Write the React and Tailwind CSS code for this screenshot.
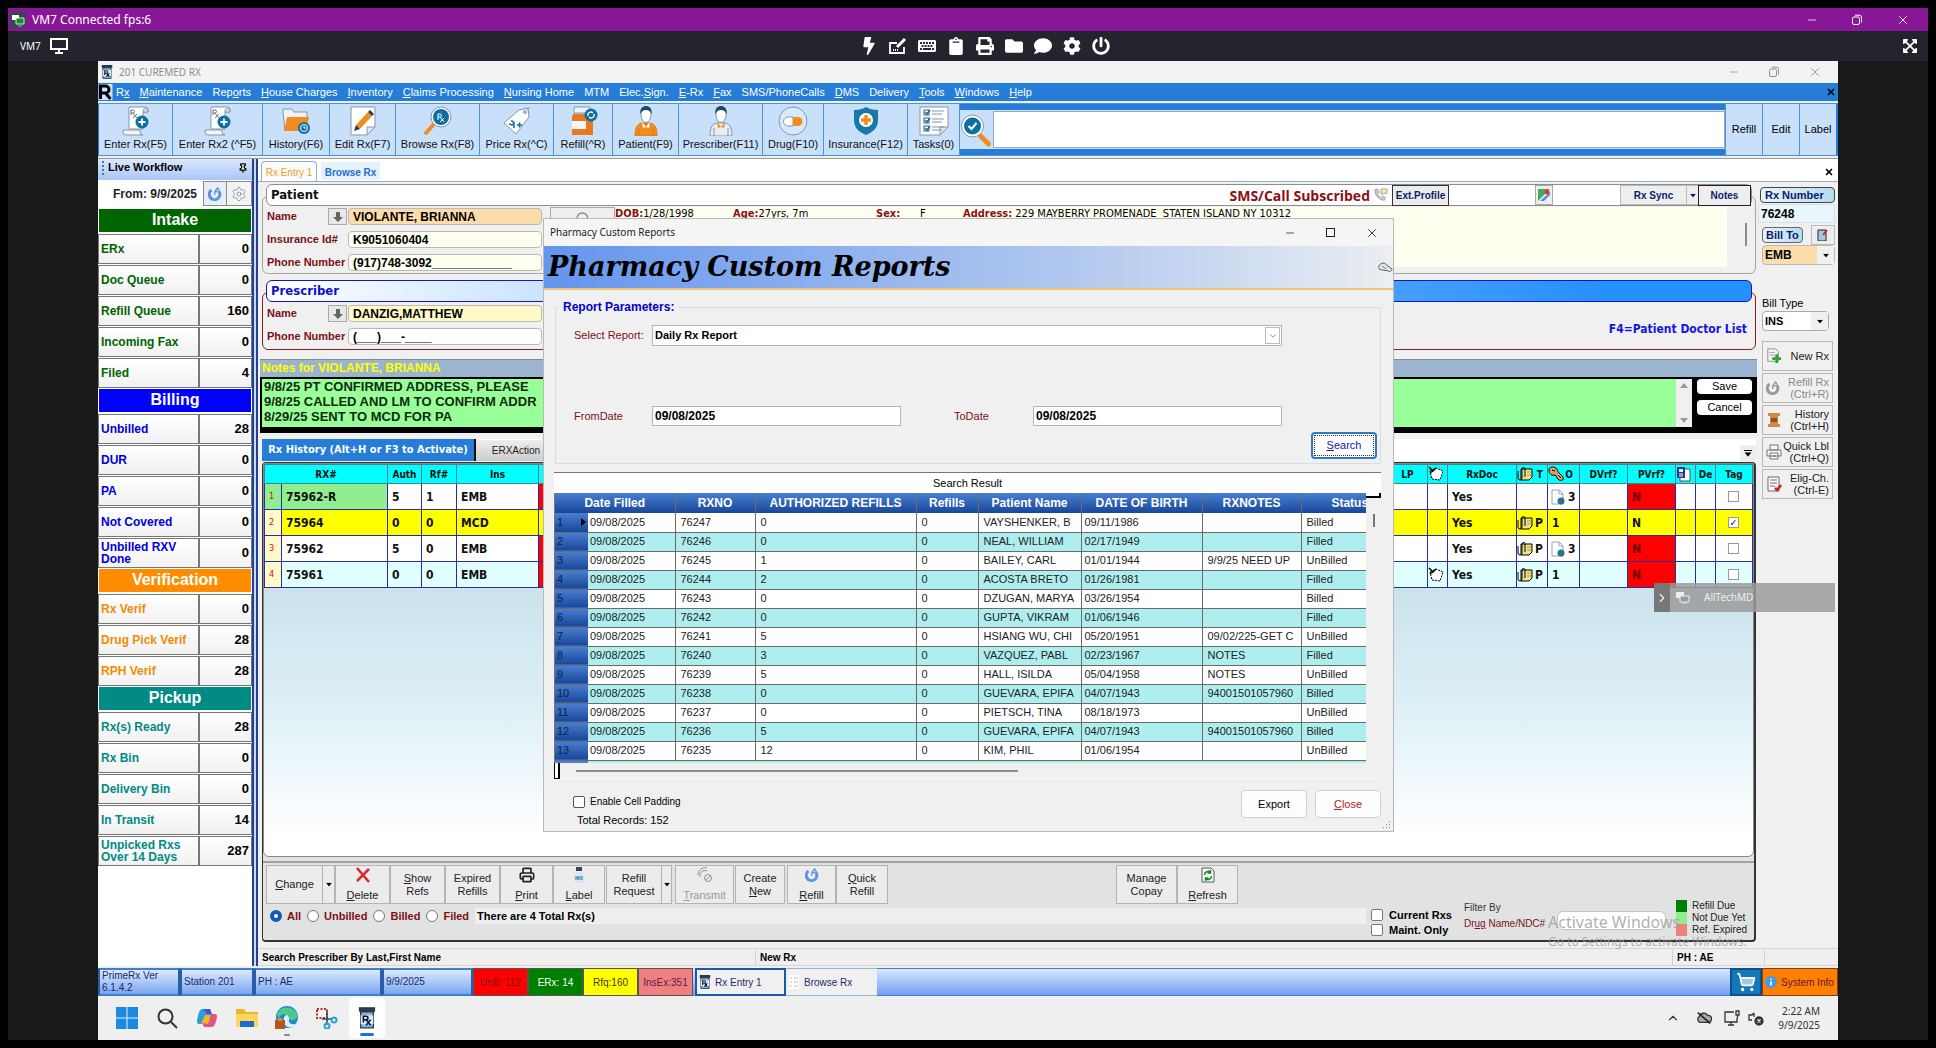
import { Minus, X, ChevronUp, ChevronRight, ChevronDown, Pin, Settings, ShoppingCart, Search, Printer } from 'lucide-react';
import { FaBolt, FaKeyboard, FaClipboard, FaPrint, FaFolder, FaComment, FaCog, FaPowerOff, FaExpandArrowsAlt } from 'react-icons/fa';

const sections = [
	{
		title: 'Intake',
		head: 'bg-[#006400]',
		text: 'text-[#006400]',
		rows: [['ERx', 0], ['Doc Queue', 0], ['Refill Queue', 160], ['Incoming Fax', 0], ['Filed', 4]],
	},
	{
		title: 'Billing',
		head: 'bg-[#0000ff]',
		text: 'text-[#0000e0]',
		rows: [['Unbilled', 28], ['DUR', 0], ['PA', 0], ['Not Covered', 0], ['Unbilled RXV Done', 0]],
	},
	{
		title: 'Verification',
		head: 'bg-[#ff8c00]',
		text: 'text-[#f08c00]',
		rows: [['Rx Verif', 0], ['Drug Pick Verif', 28], ['RPH Verif', 28]],
	},
	{
		title: 'Pickup',
		head: 'bg-[#008b85]',
		text: 'text-[#008b85]',
		rows: [['Rx(s) Ready', 28], ['Rx Bin', 0], ['Delivery Bin', 0], ['In Transit', 14], ['Unpicked Rxs Over 14 Days', 287]],
	},
];

const menus = ['R&x', '&Maintenance', 'Rep&orts', '&House Charges', '&Inventory', '&Claims Processing', '&Nursing Home', 'MTM', 'Elec.&Sign.', '&E-Rx', '&Fax', 'SMS/PhoneCalls', '&DMS', 'Delivery', '&Tools', '&Windows', '&Help'];

const reportRows = [
	['76247', '0', 'VAYSHENKER, B', '09/11/1986', '', 'Billed'],
	['76246', '0', 'NEAL, WILLIAM', '02/17/1949', '', 'Filled'],
	['76245', '1', 'BAILEY, CARL', '01/01/1944', '9/9/25 NEED UP', 'UnBilled'],
	['76244', '2', 'ACOSTA BRETO', '01/26/1981', '', 'Filled'],
	['76243', '0', 'DZUGAN, MARYA', '03/26/1954', '', 'Billed'],
	['76242', '0', 'GUPTA, VIKRAM', '01/06/1946', '', 'Filled'],
	['76241', '5', 'HSIANG WU, CHI', '05/20/1951', '09/02/225-GET C', 'UnBilled'],
	['76240', '3', 'VAZQUEZ, PABL', '02/23/1967', 'NOTES', 'Filled'],
	['76239', '5', 'HALL, ISILDA', '05/04/1958', 'NOTES', 'UnBilled'],
	['76238', '0', 'GUEVARA, EPIFA', '04/07/1943', '94001501057960', 'Billed'],
	['76237', '0', 'PIETSCH, TINA', '08/18/1973', '', 'UnBilled'],
	['76236', '5', 'GUEVARA, EPIFA', '04/07/1943', '94001501057960', 'Billed'],
	['76235', '12', 'KIM, PHIL', '01/06/1954', '', 'UnBilled'],
];

const history = [
	{ rx: '75962-R', auth: 5, rf: 1, ins: 'EMB', t: '', o: '3', doc: true },
	{ rx: '75964', auth: 0, rf: 0, ins: 'MCD', t: 'P', o: '1', tag: true },
	{ rx: '75962', auth: 5, rf: 0, ins: 'EMB', t: 'P', o: '3', doc: true },
	{ rx: '75961', auth: 0, rf: 0, ins: 'EMB', t: 'P', o: '1', note: true },
];

// "&" marks the letter that gets the accelerator underline
function Hot({ t }) {
	const i = t.indexOf('&');
	if (i < 0) return <span>{t}</span>;
	return (
		<span>
			{t.slice(0, i)}
			<span className="underline">{t[i + 1]}</span>
			{t.slice(i + 2)}
		</span>
	);
}

function Restore({ className }) {
	return (
		<svg viewBox="0 0 12 12" className={className} fill="none" stroke="currentColor">
			<rect x="1.5" y="3" width="7" height="7.5" rx="1.5" />
			<path d="M4 1.2h4.5a2 2 0 0 1 2 2V8.500" />
		</svg>
	);
}

function RxJar({ className }) {
	return (
		<svg viewBox="0 0 20 24" className={className}>
			<rect x="1" y="0" width="18" height="5" fill="#27384f" />
			<path d="M3 5h14v18H3z" fill="#8fb4dc" stroke="#27384f" strokeWidth="1.5" />
			<path d="M3 9h14v10H3z" fill="#dfe9f5" />
			<path d="M6 17V10h3a2 2 0 0 1 0 4H6m3 0 5 6m0-6-5 6" fill="none" stroke="#0b1a33" strokeWidth="1.800" />
		</svg>
	);
}

function Scroll() {
	return (
		<svg viewBox="0 0 30 30" className="h-[30px] w-[30px]">
			<path d="M8 1h16a3 3 0 0 1 3 3v2h-5v17H8z" fill="#fff" stroke="#8795a5" />
			<path d="M22 6V4a3 3 0 0 1 5 0v2z" fill="#dfe7ef" stroke="#8795a5" />
			<path d="M2 24h17v2a3 3 0 0 0 3 3H5a3 3 0 0 1-3-3z" fill="#f3f6f9" stroke="#8795a5" />
			<path d="M10 9V4h2a1.500 1.500 0 0 1 0 3h-2m2 0 4 5m0-4-4 4" fill="none" stroke="#46586c" strokeWidth=".8" />
			<circle cx="21" cy="16" r="6.500" fill="#0b6fa4" />
			<path d="M21 12.500v7M17.500 16h7" stroke="#fff" strokeWidth="1.800" />
		</svg>
	);
}

function FolderIcon() {
	return (
		<svg viewBox="0 0 30 30" className="h-[30px] w-[30px]">
			<path d="M2 6V3h9l2 3h13v18H4z" fill="#eef3f8" stroke="#8795a5" />
			<path d="M6 11h22l-3 14H3z" fill="#f28c1e" />
			<circle cx="23" cy="22" r="6" fill="#0b6fa4" />
			<circle cx="23" cy="22" r="3.500" fill="none" stroke="#fff" />
			<path d="M23 20v2h2" stroke="#fff" fill="none" />
		</svg>
	);
}

function EditIcon() {
	return (
		<svg viewBox="0 0 30 30" className="h-[30px] w-[30px]">
			<path d="M3 1h24v20l-8 8H3z" fill="#fff" stroke="#8795a5" />
			<path d="M27 21h-8v8z" fill="#dfe7ef" stroke="#8795a5" />
			<path d="m8 19 12-13 4 4-12 13z" fill="#f28c1e" />
			<path d="m20 6 2-2 4 4-2 2z" fill="#1d3f5e" />
			<path d="m8 19 4 4-6 2z" fill="#1d3f5e" />
		</svg>
	);
}

function LensRx() {
	return (
		<svg viewBox="0 0 30 30" className="h-[30px] w-[30px]">
			<path d="m10 19-7 8" stroke="#f28c1e" strokeWidth="4" strokeLinecap="round" />
			<circle cx="18" cy="11" r="10" fill="#fff" stroke="#8795a5" />
			<circle cx="18" cy="11" r="8" fill="#0b6fa4" />
			<path d="M15 14V8h2a1.500 1.500 0 0 1 0 3h-2m2 0 4 5m0-4-4 4" fill="none" stroke="#fff" />
		</svg>
	);
}

function TagIcon() {
	return (
		<svg viewBox="0 0 30 30" className="h-[30px] w-[30px]">
			<path d="M2 17 17 4l9-2 1 9-13 17z" fill="#fff" stroke="#8795a5" />
			<circle cx="23" cy="6" r="1.500" fill="#c9e0fa" stroke="#8795a5" />
			<path d="M25 4l3-3" stroke="#8795a5" />
			<path d="M9 15a2 2 0 1 1 1 4l-3-1m5 4v-6m3 3h5m-2.500-2.500v5" fill="none" stroke="#0b6fa4" strokeWidth="1.500" />
		</svg>
	);
}

function Bottle() {
	return (
		<svg viewBox="0 0 30 30" className="h-[30px] w-[30px]">
			<path d="M6 1h16v6H6z" fill="#eef3f8" stroke="#8795a5" />
			<path d="M5 8h18l2 3v18H4V11z" fill="#e8791e" />
			<path d="M4 15h14v8H4z" fill="#f4f6f8" />
			<circle cx="23" cy="9" r="6.500" fill="#0b6fa4" />
			<path d="M20 10a3 3 0 0 1 5-3m1 1a3 3 0 0 1-5 3" fill="none" stroke="#fff" strokeWidth="1.300" />
		</svg>
	);
}

function Person({ coat }) {
	return (
		<svg viewBox="0 0 30 30" className="h-[30px] w-[30px]">
			<path d="M4 30c0-8 2-12 7-13h8c5 1 7 5 7 13z" fill={coat ? '#e6edf4' : '#f28c1e'} stroke={coat ? '#8795a5' : '#d87a18'} />
			<ellipse cx="15" cy="9" rx="5" ry="7.500" fill="#fff" stroke="#8795a5" />
			<path d="M9 8c0-6 3-8 6-8s6 2 6 8c-2-3-3-4-6-4s-4 1-6 4z" fill="#1d4a66" />
			<path d="m11 16 4 5 4-5-1 6-3-1-3 1z" fill={coat ? '#f28c1e' : '#fff'} />
			<path d="M8 22v8M22 22v8" stroke={coat ? '#8795a5' : '#d87a18'} />
		</svg>
	);
}

function Pill() {
	return (
		<svg viewBox="0 0 30 30" className="h-[30px] w-[30px]">
			<circle cx="15" cy="15" r="14" fill="#d7e9fc" stroke="#8795a5" />
			<path d="M15 11H10a4 4 0 0 0 0 9h5z" fill="#fff" stroke="#8795a5" />
			<path d="M15 11h5a4 4 0 0 1 0 9h-5z" fill="#f28c1e" />
		</svg>
	);
}

function Shield() {
	return (
		<svg viewBox="0 0 30 30" className="h-[30px] w-[30px]">
			<path d="M3 4c5 0 9-1 12-3 3 2 7 3 12 3v10c0 8-5 12-12 15C8 26 3 22 3 14z" fill="#1878a8" />
			<circle cx="15" cy="14" r="7" fill="#fff" />
			<path d="M15 9v10M10 14h10" stroke="#f28c1e" strokeWidth="3.500" />
		</svg>
	);
}

function Tasks() {
	return (
		<svg viewBox="0 0 30 30" className="h-[30px] w-[30px]">
			<path d="M1 1h28v20l-8 8H1z" fill="#fff" stroke="#8795a5" />
			<path d="M29 21h-8v8z" fill="#dfe7ef" stroke="#8795a5" />
			{[4, 12, 20].map((y) => (
				<g key={y} fill="none">
					<rect x="5" y={y} width="5" height="5" stroke="#46586c" />
					<path d={`m6 ${y + 2} 2 2 3-4`} stroke="#0b6fa4" strokeWidth="1.500" />
					<path d={`M13 ${y + 1}h12M13 ${y + 4}h10`} stroke="#8795a5" />
				</g>
			))}
		</svg>
	);
}

const tools = [
	['Enter Rx(F5)', 'w-[74px]', <Scroll />],
	['Enter Rx2 (^F5)', 'w-[90px]', <Scroll />],
	['History(F6)', 'w-[67px]', <FolderIcon />],
	['Edit Rx(F7)', 'w-[66px]', <EditIcon />],
	['Browse Rx(F8)', 'w-[84px]', <LensRx />],
	['Price Rx(^C)', 'w-[74px]', <TagIcon />],
	['Refill(^R)', 'w-[59px]', <Bottle />],
	['Patient(F9)', 'w-[66px]', <Person />],
	['Prescriber(F11)', 'w-[84px]', <Person coat />],
	['Drug(F10)', 'w-[61px]', <Pill />],
	['Insurance(F12)', 'w-[84px]', <Shield />],
	['Tasks(0)', 'w-[52px]', <Tasks />],
];

function NoteTag() {
	return (
		<svg viewBox="0 0 16 16" className="h-4 w-4">
			<path d="m2 5 6-3 7 3-3 9-8-1z" fill="#fff" stroke="#000" strokeDasharray="2 1" />
			<path d="M1 1l4 4-3 2m3-2 3-3" fill="none" stroke="#000" strokeWidth="1.500" />
		</svg>
	);
}

function Clip() {
	return (
		<svg viewBox="0 0 16 16" className="h-4 w-4 shrink-0">
			<path d="M4 3h11v8l-3 3H4z" fill="#efe28a" stroke="#000" />
			<path d="M1 5v7a2 2 0 0 0 4 0V3a1.500 1.500 0 0 1 3 0v8" fill="none" stroke="#000" />
			<path d="M10 6h4M10 9h4" stroke="#a89a40" />
		</svg>
	);
}

function Doc() {
	return (
		<svg viewBox="0 0 16 16" className="h-4 w-4 shrink-0">
			<path d="M2 1h7l4 4v10H2z" fill="#fff" stroke="#9aa4ad" />
			<path d="M9 1v4h4" fill="none" stroke="#9aa4ad" />
			<circle cx="11" cy="12" r="3.500" fill="#2f6f96" />
		</svg>
	);
}

function Key() {
	return (
		<svg viewBox="0 0 16 16" className="h-4 w-4 shrink-0">
			<path d="M1 4c0-3 4-4 7-2 2 2 1 3 3 5l4 4c1 3-1 4-4 3-2-1-2-4-4-5-3 1-6-1-6-5z" fill="#d9a066" stroke="#000" />
			<path d="M4 4l3 1m3 4 3 3" stroke="#000" />
		</svg>
	);
}

function Swirl({ className }) {
	return (
		<svg viewBox="0 0 16 16" className={className} fill="none" stroke="currentColor">
			<path d="M4 3.500a6 6 0 1 0 9 2.500" strokeWidth="3.500" />
			<path d="M8 9c-1-3 0-5 3-7M11 1l3 5-6-1z" strokeWidth="1.500" />
		</svg>
	);
}

function Down({ className = '' }) {
	return (
		<svg viewBox="0 0 8 5" className={`h-[5px] w-2 ${className}`}>
			<path d="M0 0h8L4 5z" fill="currentColor" />
		</svg>
	);
}

function Workflow() {
	return (
		<aside className="w-[154px] shrink-0 bg-white">
			<div className="flex h-[21px] items-center justify-between bg-linear-to-b from-[#dbe8fc] to-[#a9c6f5] pr-1 pb-1 pl-1">
				<span className="flex items-center gap-1 text-[11px] font-bold">
					<span className="h-3.5 border-l-2 border-dotted border-[#5470a8]" />
					Live Workflow
				</span>
				<Pin className="size-[10px] fill-white stroke-[3]" />
			</div>
			<div className="flex h-[29px] items-center justify-end gap-0 pb-0.5">
				<span className="pr-1.5 text-[12px] font-bold text-[#222]">From: 9/9/2025</span>
				<button className="flex h-[25px] w-6 items-center justify-center border border-[#8a8a8a] bg-[#e6eefa]" aria-label="Reload">
					<Swirl className="h-3.5 w-3.5 text-[#5d93e0]" />
				</button>
				<button className="flex h-[25px] w-[25px] items-center justify-center border border-l-0 border-[#8a8a8a] bg-[#f4f4f4]" aria-label="Options">
					<Settings className="size-4 stroke-1 text-[#6f7780]" />
				</button>
			</div>
			{sections.map((s) => (
				<section key={s.title}>
					<h2 className={`mx-px mb-0.5 h-[23px] text-center text-[16px] leading-[22px] font-bold text-white ${s.head}`}>{s.title}</h2>
					{s.rows.map(([label, n]) => (
						<div key={label} className="mb-px flex h-[30px] border border-[#777] bg-linear-to-b from-white to-[#f1f1f1]">
							<div className={`flex w-[101px] items-center border-r-2 border-[#777] pb-px pl-0.5 text-[12px] leading-[12px] font-bold ${s.text}`}>
								<span className="max-w-[88px]">{label}</span>
							</div>
							<div className="flex flex-1 items-center justify-end pr-0.5 pb-px text-[13px] font-bold">{n}</div>
						</div>
					))}
				</section>
			))}
		</aside>
	);
}

function Field({ id, label, value, tone, arrow }) {
	return (
		<div className="flex h-[17px] items-center">
			<label htmlFor={id} className={`${arrow ? 'w-[61px]' : 'w-[81px]'} shrink-0 text-[11px] font-bold whitespace-nowrap text-[#7b1113]`}>{label}</label>
			{arrow && (
				<button className="mr-px flex h-[17px] w-[19px] items-center justify-center border border-[#aaa] bg-[#e8e8e8] text-[#666]" aria-label={`Find ${label}`}>
					<svg viewBox="0 0 10 10" className="h-2.5 w-2.5"><path d="M3 0h4v5h3l-5 5-5-5h3z" fill="currentColor" /></svg>
				</button>
			)}
			<input id={id} defaultValue={value} className={`h-[17px] w-[194px] rounded-sm border border-[#b9b9b9] px-1 text-[12px] font-bold ${tone}`} />
		</div>
	);
}

function PatientPanel() {
	return (
		<section className="mt-0.5">
			<div className="relative z-10 mx-1 flex h-[22px] items-center rounded-md border border-[#8e8e8e] bg-white pl-1">
				<h3 className="font-['DejaVu_Sans_Condensed','DejaVu_Sans',sans-serif] text-[13px] font-bold text-[#111]">Patient</h3>
				<div className="flex-1" />
				<span className="font-['Open_Sans',sans-serif] text-[14px] font-bold text-[#8b0f14]">SMS/Call Subscribed</span>
				<svg viewBox="0 0 16 16" className="mx-1 h-3.5 w-3.5">
					<path d="M1 2l3-1 2 4-2 1c1 3 2 4 4 5l2-2 3 2-1 3C6 14 1 9 1 2z" fill="#c6ccd2" stroke="#97a1ab" />
					<path d="M8 1h7v5h-4l-2 2V6H8z" fill="#f5e6b8" stroke="#a8a08a" />
				</svg>
				<button className="h-[21px] w-[57px] border border-[#333] bg-[#ececec] text-[10px] font-bold text-[#0a1b6e]">Ext.Profile</button>
				<button className="mr-[67px] ml-[86px] flex h-5 w-[18px] items-center justify-center border border-[#aaa] bg-[#eee]" aria-label="Map">
					<svg viewBox="0 0 12 12" className="h-3 w-3"><path d="M0 0h12v12H0z" fill="#3fae5a" /><path d="M0 12 12 0v12z" fill="#f2f2f2" /><path d="M2 12 12 3v3l-6 6z" fill="#4c8df5" /><circle cx="9" cy="3" r="2.500" fill="#e33b2e" /></svg>
				</button>
				<button className="h-5 w-[67px] border border-[#bbb] bg-[#eee] text-[10px] font-bold text-[#0a1b6e]">Rx Sync</button>
				<button className="flex h-5 w-[11px] items-center justify-center border-y border-[#bbb] bg-[#eee] text-[#0a1b6e]" aria-label="Rx Sync options"><Down className="scale-75" /></button>
				<button className="h-[21px] w-[53px] border border-[#222] bg-[#eee] text-[10px] font-bold text-[#0a1b6e]">Notes</button>
			</div>
			<div className="-mt-2.5 flex h-[78px] rounded-md border border-[#a5a5a5] pt-[10px] pl-1">
				<div className="flex flex-col gap-[6px] pt-px">
					<Field id="pname" label="Name" value="VIOLANTE, BRIANNA" tone="bg-[#fcdcab]" arrow />
					<Field id="pins" label="Insurance Id#" value="K9051060404" tone="bg-[#fffff0]" />
					<Field id="pphone" label="Phone Number" value="(917)748-3092____________" tone="bg-[#fffff0]" />
				</div>
				<button className="ml-2 flex h-5 w-[65px] items-center justify-center border border-[#aaa] bg-[#eee] pt-1" aria-label="Find patient">
					<Search className="size-4 text-[#7b8a8d]" />
				</button>
				<div className="mr-[18px] mb-1.5 flex flex-1 bg-[#fffff0] font-['DejaVu_Sans_Condensed','DejaVu_Sans',sans-serif] text-[11px] leading-[14px] whitespace-pre">
					<span className="w-[118px]"><b className="text-[#8b0f14]">DOB:</b>1/28/1998</span>
					<span className="w-[143px]"><b className="text-[#8b0f14]">Age:</b>27yrs, 7m</span>
					<span className="w-[44px]"><b className="text-[#8b0f14]">Sex:</b></span>
					<span className="w-[43px]">F</span>
					<span><b className="text-[#8b0f14]">Address:</b> 229 MAYBERRY PROMENADE  STATEN ISLAND NY 10312</span>
				</div>
				<div className="mt-4 mr-2 h-[23px] w-0.5 bg-[#8c8c8c]" />
			</div>
		</section>
	);
}

function PrescriberPanel() {
	return (
		<section className="mt-1.5">
			<div className="relative z-10 mx-1 flex h-[22px] items-center rounded-md border border-[#1414c8] bg-linear-to-r from-white via-[#7cbcff] via-45% to-[#2590ff] to-90% pl-1">
				<h3 className="font-['DejaVu_Sans_Condensed','DejaVu_Sans',sans-serif] text-[13px] font-bold text-[#1010c8]">Prescriber</h3>
			</div>
			<div className="-mt-2.5 flex h-[58px] justify-between rounded-md border border-[#8b2020] pt-3 pr-2 pl-1">
				<div className="flex flex-col gap-[6px]">
					<Field id="dname" label="Name" value="DANZIG,MATTHEW" tone="bg-[#fffac8]" arrow />
					<Field id="dphone" label="Phone Number" value="(___)___-____" tone="bg-white" />
				</div>
				<span className="self-center pt-1 font-['DejaVu_Sans_Condensed','DejaVu_Sans',sans-serif] text-[12px] font-bold text-[#1515e0]">F4=Patient Doctor List</span>
			</div>
		</section>
	);
}

function NotesPanel() {
	return (
		<section className="mt-[9px] -mr-px -ml-0.5">
			<div className="h-[18px] border-t border-[#7d8796] bg-[#9bb4d0] pl-0.5 text-[12px] leading-[17px] font-bold text-[#ffff00]">Notes for VIOLANTE, BRIANNA</div>
			<div className="flex h-14 bg-black pt-0.5 pr-[5px] pl-0.5">
				<textarea
					aria-label="Patient notes"
					readOnly
					className="h-12 flex-1 resize-none overflow-hidden bg-[#99ff99] px-0.5 text-[13px] leading-[15px] font-bold text-[#0d2b0d]"
					defaultValue={'9/8/25 PT CONFIRMED ADDRESS, PLEASE\n9/8/25 CALLED AND LM TO CONFIRM ADDR\n8/29/25 SENT TO MCD FOR PA'}
				/>
				<div className="flex h-12 w-4 flex-col items-center justify-between bg-[#f0f0f0] py-1 text-[#999]">
					<Down className="rotate-180" />
					<Down />
				</div>
				<div className="ml-[5px] flex flex-col gap-1.5">
					<button className="h-[15px] w-[55px] rounded-sm bg-white text-[11px] leading-[15px]">Save</button>
					<button className="h-[15px] w-[55px] rounded-sm bg-white text-[11px] leading-[15px]">Cancel</button>
				</div>
			</div>
		</section>
	);
}

function HistoryTable() {
	const rowBg = ['bg-white', 'bg-[#ffff00]', 'bg-white', 'bg-[#e0ffff]'];
	const numBg = ['bg-[#90ee90]', 'bg-[#fffac8]', 'bg-[#fffac8]', 'bg-[#fffac8]'];
	return (
		<table className="w-full table-fixed border-collapse font-['DejaVu_Sans_Condensed','DejaVu_Sans',sans-serif] text-[12px] font-bold text-[#111] [&_td]:border [&_td]:border-[#2a2aa8] [&_td]:p-0 [&_td]:pl-1 [&_th]:border [&_th]:border-[#4b7d95] [&_th]:p-0">
			<colgroup>
				{['w-[17px]', 'w-[106px]', 'w-[34px]', 'w-[35px]', 'w-[82px]', 'w-[70px]', '', 'w-[40px]', 'w-[20px]', 'w-[69px]', 'w-[31px]', 'w-[32px]', 'w-[48px]', 'w-[48px]', 'w-[20px]', 'w-[20px]', 'w-[37px]'].map((w, i) => (
					<col key={i} className={w} />
				))}
			</colgroup>
			<thead>
				<tr className="h-[19px] bg-[#00ffff] text-[10px]">
					<th colSpan={2}>RX#</th>
					<th>Auth</th>
					<th>Rf#</th>
					<th>Ins</th>
					<th>Status</th>
					<th>Drug Name</th>
					<th className="text-center">LP</th>
					<th><NoteTag /></th>
					<th>RxDoc</th>
					<th><span className="flex items-center justify-between pr-1"><Clip />T</span></th>
					<th><span className="flex items-center justify-between pr-1.5"><Key />O</span></th>
					<th>DVrf?</th>
					<th>PVrf?</th>
					<th>
						<svg viewBox="0 0 16 16" className="h-4 w-4"><path d="M4 3h10v12H4z" fill="#fff" stroke="#555" /><path d="M1 1h8v11H1z" fill="#25378c" /><path d="M3 3h4v3H3z" fill="#cfe" /><path d="M3 8h4M3 10h4" stroke="#fff" /></svg>
					</th>
					<th>De</th>
					<th>Tag</th>
				</tr>
			</thead>
			<tbody>
				{history.map((r, i) => (
					<tr key={i} className={`h-[26px] ${rowBg[i]}`}>
						<td className={`text-[9px] font-normal text-[#d01010] ${numBg[i]}`}>{i + 1}</td>
						<td className={i === 0 ? 'bg-[#90ee90]' : ''}>{r.rx}</td>
						<td>{r.auth}</td>
						<td>{r.rf}</td>
						<td>{r.ins}</td>
						<td className={i === 1 ? '' : 'bg-[#ff0000]'}></td>
						<td></td>
						<td></td>
						<td><span className="-ml-1 block">{r.note && <NoteTag />}</span></td>
						<td>Yes</td>
						<td><span className="-ml-1 flex items-center justify-between pr-1">{r.t && <Clip />}{r.t}</span></td>
						<td><span className="flex items-center gap-0.5 pr-1">{r.doc && <span className="-ml-0.5"><Doc /></span>}{r.o}</span></td>
						<td></td>
						<td className={i === 1 ? '' : 'bg-[#ff0000] text-[#6b0000]'}>N</td>
						<td></td>
						<td></td>
						<td>
							<input
								type="checkbox"
								aria-label={`Tag ${r.rx}`}
								defaultChecked={r.tag}
								className="mx-auto -ml-1 block size-[11px] translate-x-3 appearance-none border border-[#999] bg-white text-center text-[10px] leading-[9px] before:hidden before:content-['✓'] checked:before:block"
							/>
						</td>
					</tr>
				))}
			</tbody>
		</table>
	);
}

function Act({ t, t2, w, icon, off, className = '' }) {
	return (
		<button className={`flex h-[39px] flex-col items-center justify-center border border-[#b4b4b4] bg-[#ececec] text-[11px] leading-[13px] ${w} ${off ? 'text-[#9a9a9a]' : 'text-[#222]'} ${className}`}>
			{icon && <span className="mb-1.5 flex h-4 items-center">{icon}</span>}
			<Hot t={t} />
			{t2 && <Hot t={t2} />}
		</button>
	);
}

function ActionBar() {
	return (
		<div className="flex pl-[3px]">
			<Act t="&Change" w="w-[57px]" />
			<button className="-ml-px flex w-[13px] items-center justify-center border border-[#b4b4b4] bg-[#ececec]" aria-label="Change options"><Down className="scale-75" /></button>
			<Act t="&Delete" w="w-[55px]" icon={<svg viewBox="0 0 16 16" className="h-4 w-4"><path d="m2 1 12 14M14 2 2 14" stroke="#d8262c" strokeWidth="2.500" /></svg>} />
			<Act t="&Show" t2="Refs" w="w-[55px]" />
			<Act t="Expired" t2="Refills" w="w-[55px]" />
			<Act t="&Print" w="w-[53px]" icon={<Printer className="size-4 stroke-[2.5]" />} />
			<Act t="&Label" w="w-[52px]" icon={<svg viewBox="0 0 16 16" className="h-4 w-4"><path d="M5 0h6v4H5z" fill="#3a4654" /><path d="M5 5h6l2 3v8H3V8z" fill="#dbe8f2" /><path d="M4 9h8v4H4z" fill="#6fb3e0" /><path d="M6 11h2" stroke="#d33" /></svg>} />
			<Act t="Refill" t2="Request" w="w-[56px]" className="ml-px" />
			<button className="-ml-px flex w-[11px] items-center justify-center border border-[#b4b4b4] bg-[#ececec]" aria-label="Refill request options"><Down className="scale-75" /></button>
			<Act t="&Transmit" w="w-[59px]" off className="ml-[3px]" icon={<svg viewBox="0 0 16 16" className="h-4 w-4" fill="none" stroke="#8f8f8f"><path d="M1 8a7 7 0 0 1 9-7M3 10a5 5 0 0 1 7-6" /><circle cx="11" cy="11" r="3.500" /><path d="m9 13 4-4" /></svg>} />
			<Act t="Create" t2="&New" w="w-[50px]" className="ml-px" />
			<Act t="&Refill" w="w-[49px]" className="ml-0.5" icon={<Swirl className="h-3.5 w-3.5 text-[#5d93e0]" />} />
			<Act t="&Quick" t2="Refill" w="w-[52px]" />
			<Act t="Manage" t2="Copay" w="w-[61px]" className="ml-[228px]" />
			<Act t="&Refresh" w="w-[61px]" icon={<svg viewBox="0 0 14 16" className="h-4 w-3.5"><path d="M1 1h9l3 3v11H1z" fill="#fff" stroke="#556" /><path d="M3.500 8a3.500 3.500 0 0 1 6-2.500M10.500 9a3.500 3.500 0 0 1-6 2.500M9.500 3v3h-3M4.500 14v-3h3" fill="none" stroke="#1a8a1a" strokeWidth="1.600" /></svg>} />
		</div>
	);
}

function FilterBar() {
	return (
		<div className="flex items-start pt-1 pl-[7px] text-[11px]">
			<div className="flex h-4 items-center font-bold text-[#7b1113]">
				{['All', 'Unbilled', 'Billed', 'Filed'].map((n, i) => (
					<label key={n} className="mr-1.5 flex items-center gap-[5px]">
						<input type="radio" name="status" defaultChecked={i === 0} className="size-3 appearance-none rounded-full border border-[#777] bg-white checked:border-4 checked:border-[#0f5cb0]" />
						{n}
					</label>
				))}
			</div>
			<div className="h-4 min-w-0 flex-1 bg-[#efefef] px-0.5 leading-[17px] font-bold">There are 4 Total Rx(s)</div>
			<div className="ml-[5px] flex w-[93px] flex-col gap-px font-bold">
				{['Current Rxs', 'Maint. Only'].map((n) => (
					<label key={n} className="flex h-3.5 items-center gap-1.5 whitespace-nowrap">
						<input type="checkbox" className="size-3 appearance-none rounded-xs border border-[#777] bg-white" />
						{n}
					</label>
				))}
			</div>
			<div className="-mt-2 flex w-[93px] flex-col text-[10px] leading-4 whitespace-nowrap">
				<span className="text-[#333]">Filter By</span>
				<label htmlFor="ndc" className="text-[#7b1113]">Dr<u>ug</u> Name/NDC#</label>
			</div>
			<input id="ndc" className="mt-[3px] h-[19px] w-[109px] rounded-md border border-[#c4c4c4] bg-white" />
			<ul className="-mt-2 ml-2.5 w-[78px] text-[10px] leading-3 whitespace-nowrap text-[#222]">
				<li className="flex gap-[5px]"><i className="h-3 w-[11px] bg-[#008000]" />Refill Due</li>
				<li className="flex gap-[5px]"><i className="h-3 w-[11px] bg-[#90ee90]" />Not Due Yet</li>
				<li className="flex gap-[5px]"><i className="h-3 w-[11px] bg-[#f08080]" />Ref. Expired</li>
			</ul>
		</div>
	);
}

function RightRail() {
	const items = [
		['New Rx', '', <svg viewBox="0 0 18 18" className="size-4"><path d="M2 1h9l3 3v11H2z" fill="#f4f4f4" stroke="#889" /><path d="M4 5h6M4 8h6" stroke="#99a" /><path d="M12 7v10M7 12h10" stroke="#2ea82e" strokeWidth="3" /></svg>],
		['Refill Rx', '(Ctrl+R)', <Swirl className="size-3.5 text-[#9a9a9a]" />],
		['History', '(Ctrl+H)', <svg viewBox="0 0 16 16" className="size-4"><path d="M2 1h12v3h-2v8h2v3H2v-3h2V4H2z" fill="#cf8b45" /><path d="M5 6h6v4H5z" fill="#8e4f1f" /></svg>],
		['Quick Lbl', '(Ctrl+Q)', <svg viewBox="0 0 16 16" className="size-4" fill="#f7f7f7" stroke="#777"><path d="M4 1h8v5H4zM1 6h14v6H1zM4 9h8v6H4z" /><path d="M6 12h4" stroke="#3a3" /></svg>],
		['Elig-Ch.', '(Ctrl-E)', <svg viewBox="0 0 16 16" className="size-4"><path d="M2 1h11v14H2z" fill="#fff" stroke="#666" /><path d="M4 4h7M4 7h7M4 10h5" stroke="#666" /><path d="m9 12 2 2 4-5" fill="none" stroke="#e01818" strokeWidth="2.500" /></svg>],
	];
	return (
		<aside className="w-[82px] shrink-0 pt-[5px] pr-[3px] pl-0.5 text-[11px]">
			<div className="ml-0.5 h-4 rounded-sm border border-[#444] bg-linear-to-r from-[#e9f4fa] to-[#b5dcec] pl-1 text-[11px] leading-[15px] font-bold text-[#0a1b6e]">Rx Number</div>
			<div className="mt-px h-[19px] border border-[#dde] bg-[#e8f7fb] pl-0.5 text-[12px] leading-[18px] font-bold">76248</div>
			<div className="mt-0.5 flex items-center justify-between pl-1">
				<label htmlFor="billto" className="h-4 rounded-sm border border-[#666] bg-linear-to-r from-[#e9f4fa] to-[#b5dcec] px-[3px] text-[11px] leading-[15px] font-bold text-[#0a1b6e]">Bill To</label>
				<button className="flex h-5 w-6 items-center justify-center border border-[#bbb] bg-[#eee]" aria-label="Edit bill to">
					<svg viewBox="0 0 12 12" className="size-3"><path d="M1 1h8v11H1z" fill="#a9c6e0" stroke="#222" /><path d="m6 6 4-5" stroke="#d22" strokeWidth="2" /></svg>
				</button>
			</div>
			<div className="relative ml-1 h-5">
				<select id="billto" className="h-5 w-full appearance-none rounded-sm border border-[#b9b9b9] bg-[#fcdcab] px-0.5 text-[12px] font-bold"><option>EMB</option></select>
				<span className="pointer-events-none absolute inset-y-px right-px flex w-[17px] items-center justify-center bg-[#f0f0f0]"><Down className="scale-75" /></span>
			</div>
			<label htmlFor="billtype" className="mt-[30px] block pl-1 leading-4">Bill Type</label>
			<div className="relative mr-1.5 ml-1 h-5">
				<select id="billtype" className="h-5 w-full appearance-none rounded-sm border border-[#aaa] bg-white px-0.5 text-[11px] font-bold"><option>INS</option></select>
				<span className="pointer-events-none absolute inset-y-px right-px flex w-[17px] items-center justify-center bg-[#f0f0f0]"><Down className="scale-75" /></span>
			</div>
			<div className="mt-2.5 mr-0.5 ml-1 flex flex-col gap-0.5">
				{items.map(([a, b, icon], i) => (
					<button key={a} className={`flex h-[30px] items-center justify-between border border-[#b9b9b9] bg-[#f0f0f0] px-[3px] text-right leading-3 ${i === 1 ? 'text-[#8a8a8a]' : 'text-[#222]'}`}>
						{icon}
						<span className="whitespace-nowrap">{a}{b && <br />}{b}</span>
					</button>
				))}
			</div>
		</aside>
	);
}

function ReportsDialog() {
	const cell = 'border-r border-[#6b6b6b] overflow-hidden whitespace-nowrap';
	return (
		<div role="dialog" aria-label="Pharmacy Custom Reports" className="absolute top-[157px] left-[445px] z-20 flex h-[614px] w-[851px] flex-col border border-[#b9b9b9] bg-[#f0f0f0] text-[11px]">
			<div className="flex h-[27px] items-center justify-between bg-[#f5f5f5] pr-[14px] pl-1.5 font-['Noto_Sans',sans-serif] text-[10px] text-[#222]">
				<span>Pharmacy Custom Reports</span>
				<span className="flex items-center gap-[30px]">
					<Minus className="size-3 stroke-[1.500]" />
					<span className="size-[9px] border border-[#222]" />
					<X className="size-3.5 stroke-[1.500]" />
				</span>
			</div>
			<div className="flex h-11 items-center justify-between border-b-2 border-[#f0c478] bg-linear-to-r from-[#6495ed] via-[#aec6ee] via-60% to-[#ebeef2] pl-1">
				<h1 className="font-['DejaVu_Serif',serif] text-[27px] font-bold text-black italic">Pharmacy Custom Reports</h1>
				<svg viewBox="0 0 16 12" className="h-3 w-[15px]"><path d="M1 5c2-4 7-4 8-1l6 4c0 3-3 3-5 2L4 9C1 9 0 7 1 5z" fill="#e4e8ec" stroke="#555" /><path d="M4 5l5 3" stroke="#777" /></svg>
			</div>

			<fieldset className="mx-[11px] mt-[9px] mr-3 h-[165px] border border-[#dcdcdc] pl-[18px]">
				<legend className="-ml-[15px] px-1 text-[12px] leading-4 font-bold text-[#0000cd]">Report Parameters:</legend>
				<div className="flex items-center pt-[10px]">
					<label htmlFor="report" className="w-[78px] text-[#7b1113]">Select Report:</label>
					<div className="relative w-[630px]">
						<select id="report" className="block h-[21px] w-full appearance-none border border-[#b5b5b5] bg-white px-0.5 text-[11px] font-bold"><option>Daily Rx Report</option></select>
						<span className="pointer-events-none absolute inset-y-0.5 right-0.5 flex w-[15px] items-center justify-center border border-[#bbb] bg-white"><ChevronDown className="size-2.5 text-[#777]" /></span>
					</div>
				</div>
				<div className="flex items-center pt-[60px]">
					<label htmlFor="from" className="w-[78px] text-[#7b1113]">FromDate</label>
					<input id="from" defaultValue="09/08/2025" className="h-5 w-[249px] border border-[#b5b5b5] bg-white px-0.5 text-[12px] font-bold" />
					<label htmlFor="to" className="ml-[53px] w-[79px] text-[#7b1113]">ToDate</label>
					<input id="to" defaultValue="09/08/2025" className="h-5 w-[249px] border border-[#b5b5b5] bg-white px-0.5 text-[12px] font-bold" />
				</div>
				<div className="flex justify-end pt-1.5 pr-[3px]">
					<button className="h-[27px] w-[66px] rounded-sm border-2 border-[#2d7ac0] bg-[#fdfdfd] p-px text-[#2020a8]">
						<span className="flex h-full items-center justify-center border border-dotted border-[#333]"><Hot t="&Search" /></span>
					</button>
				</div>
			</fieldset>

			<div className="mt-2 mr-3 ml-2.5 border-t border-[#777]">
				<div className="bg-white text-center leading-5">Search Result</div>
				<div className="flex">
					<div className="h-[270px] min-w-0 flex-1 overflow-hidden border-l border-[#777]">
						<table className="w-[859px] table-fixed border-collapse text-[#222]">
							<colgroup>
								{['w-[33px]', 'w-[87px]', 'w-[80px]', 'w-[161px]', 'w-[62px]', 'w-[103px]', 'w-[121px]', 'w-[99px]', 'w-[113px]'].map((w, i) => (
									<col key={i} className={w} />
								))}
							</colgroup>
							<thead>
								<tr className="h-5 bg-linear-to-b from-[#4a7fd0] to-[#17479a] text-[12px] text-white">
									<th colSpan={2} className={cell}>Date Filled</th>
									{['RXNO', 'AUTHORIZED REFILLS', 'Refills', 'Patient Name', 'DATE OF BIRTH', 'RXNOTES'].map((h) => <th key={h} className={cell}>{h}</th>)}
									<th className="pr-4">Status</th>
								</tr>
							</thead>
							<tbody>
								{reportRows.map(([rx, auth, name, dob, note, status], i) => (
									<tr key={rx} className={`h-[19px] border-b border-[#6b6b6b] ${i % 2 ? 'bg-[#afeeee]' : 'bg-white'}`}>
										<td className="bg-linear-to-b from-[#4a7fd0] to-[#17479a] p-0 pl-0.5 text-[#0c1f4a]">
											<span className="flex items-center justify-between pr-0.5">
												{i + 1}
												{i === 0 && <svg viewBox="0 0 5 8" className="h-2 w-[5px]"><path d="m0 0 5 4-5 4z" /></svg>}
											</span>
										</td>
										<td className={`${cell} pl-0.5`}>09/08/2025</td>
										<td className={`${cell} pl-[5px]`}>{rx}</td>
										<td className={`${cell} pl-[5px]`}>{auth}</td>
										<td className={`${cell} pl-[5px]`}>0</td>
										<td className={`${cell} pl-[5px]`}>{name}</td>
										<td className={`${cell} pl-[3px]`}>{dob}</td>
										<td className={`${cell} pl-[5px]`}>{note}</td>
										<td className="pl-[5px]">{status}</td>
									</tr>
								))}
								<tr className="h-[19px] bg-[#afeeee]"><td className="bg-[#4a7fd0]"></td><td colSpan={8}></td></tr>
							</tbody>
						</table>
					</div>
					<div className="w-[15px]">
						<div className="h-[5px] border-r-2 border-b-2 border-black bg-white" />
						<div className="mt-4 ml-[7px] h-[13px] w-0.5 bg-[#777]" />
					</div>
				</div>
				<div className="flex h-4 items-center border-b border-[#fafafa]">
					<div className="h-4 w-1.5 border-r-2 border-b border-l border-black bg-white" />
					<div className="ml-4 h-0.5 w-[442px] bg-[#8a8a8a]" />
				</div>
			</div>

			<div className="flex items-start justify-between pt-[11px] pr-3 pl-[29px]">
				<div className="pt-1">
					<label className="flex items-center gap-[5px] text-[10px] leading-4">
						<input type="checkbox" className="size-3 appearance-none rounded-xs border border-[#555] bg-white" />
						Enable Cell Padding
					</label>
					<p className="pt-0.5 pl-1">Total Records: 152</p>
				</div>
				<div className="flex gap-2">
					<button className="h-7 w-[66px] rounded-sm border border-[#d0d0d0] bg-[#fdfdfd]">Export</button>
					<button className="h-7 w-[66px] rounded-sm border border-[#d0d0d0] bg-[#fdfdfd] text-[#c02020]"><Hot t="&Close" /></button>
				</div>
			</div>
			<svg viewBox="0 0 8 8" className="absolute right-0.5 bottom-0.5 size-2"><path d="M6 0h1v1H6zM3 3h1v1H3zM6 3h1v1H6zM0 6h1v1H0zM3 6h1v1H3zM6 6h1v1H6z" fill="#888" /></svg>
		</div>
	);
}

function BlueBar() {
	const box = 'flex items-center border-2 border-[#2a5da8] border-y-[#3f7fd0] bg-linear-to-b from-[#dcebff] to-[#7aa5ee] px-0.5 leading-3 text-[#1b2a6b]';
	const tile = 'flex w-[55px] items-center justify-center border border-[#555] whitespace-nowrap';
	return (
		<footer className="flex h-7 bg-linear-to-b from-[#dcebff] to-[#6f9cf0] text-[10px]">
			<span className={`${box} w-[82px]`}>PrimeRx Ver<br />6.1.4.2</span>
			<span className={`${box} w-[74px]`}>Station 201</span>
			<span className={`${box} w-[128px]`}>PH : AE</span>
			<span className={`${box} w-[91px]`}>9/9/2025</span>
			<span className={`${tile} bg-[#ff0000] text-[#8a1010]`}>UnB: 112</span>
			<span className={`${tile} bg-[#008000] text-white`}>ERx: 14</span>
			<span className={`${tile} bg-[#ffff00] text-[#3c3c10]`}>Rfq:160</span>
			<span className={`${tile} bg-[#f08080] text-[#5a1a50]`}>InsEx:351</span>
			<button className="ml-0.5 flex w-[91px] items-center gap-1 border-2 border-[#1b5aa8] bg-[#f0f0f0] px-0.5 text-[10px] text-[#1b2a6b]"><RxJar className="h-3.5 w-3" />Rx Entry 1</button>
			<button className="flex w-[91px] items-center gap-1 border-y border-[#8db8d8] bg-[#f0f0f0] px-0.5 text-[10px] text-[#1b2a6b]">
				<svg viewBox="0 0 12 14" className="h-3.5 w-3"><path d="M1 0h10v14H1z" fill="#fff" /><path d="M2 3h2m2 0h4M2 7h2m2 0h4M2 11h2m2 0h4" stroke="#cbb" /></svg>
				Browse Rx
			</button>
			<div className="flex-1 border-y border-[#3f7fd0]" />
			<button className="flex w-8 items-center justify-center border-2 border-[#0d4f8a] bg-[#1478b8] text-white" aria-label="Cart"><ShoppingCart className="size-5 fill-white/60" /></button>
			<button className="flex w-[76px] items-center gap-1 border border-[#8a3c10] bg-[#ff8000] px-0.5 text-[10px] whitespace-nowrap text-[#6b1030]">
				<svg viewBox="0 0 14 14" className="size-3 shrink-0"><circle cx="7" cy="7" r="7" fill="#3d9be8" /><path d="M7 6v5M7 3v1.500" stroke="#fff" strokeWidth="2" /></svg>
				System Info
			</button>
		</footer>
	);
}

function Taskbar() {
	return (
		<footer className="flex h-11 items-center justify-between bg-[#efefef] pl-[11px]">
			<div className="flex items-center gap-1">
				{[
					<svg viewBox="0 0 22 22" className="size-[22px]" fill="#1b8ae0"><path d="M0 0h10.500v10.500H0zM11.500 0H22v10.500H11.500zM0 11.500h10.500V22H0zM11.500 11.500H22V22H11.500z" /></svg>,
					<svg viewBox="0 0 22 22" className="size-[22px]" fill="none" stroke="#333" strokeWidth="2"><circle cx="9.500" cy="9.500" r="7" /><path d="m15 15 6 6" /></svg>,
					<svg viewBox="0 0 22 22" className="size-[22px]"><path d="M7 2h7l2 7h-6L7 17H3c-3 0-2-4-1-8 1-5 2-7 5-7z" fill="#2b9fd8" /><path d="M5 17l4-9h6l-2 9z" fill="#f0b429" /><path d="M15 20H8l-2-4 6 1 3-10h4c3 0 2 4 1 7-1 4-2 6-5 6z" fill="#e2557f" /><path d="M7 2h7l2 5h-5z" fill="#4353c8" /></svg>,
					<svg viewBox="0 0 22 22" className="size-[22px]"><path d="M0 2h8l2 3h12v14H0z" fill="#f0b429" /><path d="M0 7h22v13H0z" fill="#ffd45c" /><path d="M4 14h14v6H4z" fill="#1b6fc0" /></svg>,
					<svg viewBox="0 0 24 24" className="size-6"><circle cx="12" cy="11" r="11" fill="#1f86cf" /><path d="M2 8C4 1 16-2 22 7c2 5-2 8-7 7-3-1-1-3-3-5-3-2-7 0-9 4z" fill="#49c98b" /><path d="M11 9c3 0 3 3 3 5-1 3 3 5 7 4-4 5-10 4-12-1-1-4 0-7 2-8z" fill="#d9f0f8" /><path d="M0 14h10v9H0z" fill="#b8561a" /><path d="M3 12h4v3H3z" fill="#e08a3c" /></svg>,
					<svg viewBox="0 0 22 22" className="size-[22px]" fill="none"><path d="M1 2h10v9H1z" stroke="#c02828" strokeWidth="2" strokeDasharray="2 1.500" /><path d="M11 4v14M6 12h10" stroke="#3a4654" strokeWidth="1.500" /><circle cx="18" cy="13" r="2.500" stroke="#2b9fd8" strokeWidth="2" /><circle cx="11" cy="19" r="2.500" stroke="#2b9fd8" strokeWidth="2" /></svg>,
					<RxJar className="h-[22px] w-[18px]" />,
				].map((icon, i) => (
					<button key={i} aria-label={`App ${i + 1}`} className={`relative flex h-10 w-9 items-center justify-center rounded-sm ${i === 6 ? 'bg-white' : ''}`}>
						{icon}
						{i === 6 && <i className="absolute bottom-0.5 h-[3px] w-3.5 rounded-full bg-[#1b78d0]" />}
						{i === 4 && <i className="absolute bottom-0.5 h-0.5 w-1.5 rounded-full bg-[#888]" />}
					</button>
				))}
			</div>
			<div className="flex items-center pr-[18px] text-[#333]">
				<ChevronUp className="mr-4 size-3.5" />
				<svg viewBox="0 0 18 14" className="mr-3 h-3.5 w-4"><path d="M4 12a4 4 0 0 1 0-7 5 5 0 0 1 9-1 4 4 0 0 1 1 8z" fill="#aaa" stroke="#333" strokeWidth="1.500" /><path d="m2 1 14 12" stroke="#222" strokeWidth="1.800" /></svg>
				<svg viewBox="0 0 16 16" className="mr-2 size-4" fill="none" stroke="#333" strokeWidth="1.300"><path d="M10 2H1v10h12V8M4 15h6M7 12v3M12 1h3v4h-3zM13.500 5v3" /></svg>
				<svg viewBox="0 0 16 16" className="mr-3.5 size-4" fill="none" stroke="#333" strokeWidth="1.300"><path d="M6 3 4 5H1v5h3M6 3v4" /><circle cx="11" cy="11" r="4" fill="#333" /><path d="m9.500 9.500 3 3m0-3-3 3" stroke="#fff" /></svg>
				<div className="text-right font-['Noto_Sans',sans-serif] text-[10px] leading-[14px]">2:22 AM<br />9/9/2025</div>
			</div>
		</footer>
	);
}

export default function App() {
	return (
		<div className="flex min-h-screen flex-col bg-black p-2 font-['Liberation_Sans',Arial,sans-serif] text-black">
			<header className="flex h-[23px] items-center justify-between bg-[#881798] pr-[18px] pl-0.5 text-white">
				<span className="flex items-center gap-1.5 font-['Noto_Sans',sans-serif] text-[12px]">
					<svg viewBox="0 0 16 16" className="size-4"><rect width="16" height="16" rx="2" fill="#3a4552" /><path d="M2 3h7v5H2z" fill="#fff" /><path d="M6 6h8v6H6z" fill="#1a8a2a" stroke="#fff" strokeWidth=".8" /><path d="M8 14h4" stroke="#aaa" /></svg>
					VM7 Connected fps:6
				</span>
				<span className="flex items-center gap-[33px]">
					<Minus className="size-3 stroke-[1.500]" />
					<Restore className="size-3" />
					<X className="size-3.5 stroke-[1.500]" />
				</span>
			</header>
			<div className="flex h-[30px] items-center bg-[#24242f] pr-2.5 pl-3 text-white">
				<div className="flex flex-1 items-center gap-2 font-['Noto_Sans',sans-serif] text-[10px]">
					VM7
					<svg viewBox="0 0 20 16" className="h-4 w-5" fill="none" stroke="#fff" strokeWidth="2"><path d="M2 1h16v10H2zM6 15h8M10 11v4" /></svg>
				</div>
				<nav className="ml-8 flex items-center gap-[11px]">
					<FaBolt className="h-[18px] w-[18px]" />
					<svg viewBox="0 0 18 18" className="h-[18px] w-[18px]" fill="none" stroke="#fff" strokeWidth="1.800"><path d="M8 6H1v10h14v-6" /><path d="m8 10 8-8" strokeWidth="3" /><path d="M4 13h1m1 0h1m1 0h1" /></svg>
					<FaKeyboard className="h-[18px] w-[18px]" />
					<FaClipboard className="h-[18px] w-[18px]" />
					<FaPrint className="h-[18px] w-[18px]" />
					<FaFolder className="h-[18px] w-[18px]" />
					<FaComment className="h-[18px] w-[18px]" />
					<FaCog className="h-[18px] w-[18px]" />
					<FaPowerOff className="h-[18px] w-[18px]" />
				</nav>
				<div className="flex flex-1 justify-end"><FaExpandArrowsAlt className="size-4" /></div>
			</div>

			<div className="flex flex-1 bg-[#191919] px-[90px]">
				<div className="relative flex min-w-0 flex-1 flex-col bg-[#f0f0f0]">
					<div className="flex h-[22px] items-center justify-between bg-[#f3f3f3] pr-4 pl-[3px] text-[#8e8e8e]">
						<span className="flex items-center gap-1.5 font-['Noto_Sans',sans-serif] text-[10px]">
							<RxJar className="h-3.5 w-3" />
							201 CUREMED RX
						</span>
						<span className="flex items-center gap-7">
							<Minus className="size-3 stroke-[1.500]" />
							<Restore className="size-3" />
							<X className="size-3.5 stroke-[1.500]" />
						</span>
					</div>
					<nav className="flex h-[18px] items-center bg-[#267dd8] pr-0.5 text-[11px] text-white">
						<svg viewBox="0 0 14 16" className="mr-[3px] h-4 w-[15px]"><path d="M0 0h14v16H0z" fill="#cfe2f8" /><path d="M2 15V2h5a3.500 3.500 0 0 1 0 7H2m5 0 5 6" fill="none" stroke="#000" strokeWidth="3" /></svg>
						{menus.map((m) => <a key={m} href="#" className="mr-2.5 whitespace-nowrap"><Hot t={m} /></a>)}
						<X className="ml-auto size-2.5 stroke-[4] text-black" />
					</nav>
					<div className="mt-0.5 flex h-[53px] border-y border-[#4a93dd] bg-[#267dd8] pr-0.5 pl-px">
						{tools.map(([label, w, icon]) => (
							<button key={label} className={`flex shrink-0 flex-col items-center border-r border-[#4a93dd] bg-[#c9e0fa] pt-0.5 text-[11px] whitespace-nowrap text-[#111] ${w}`}>
								{icon}
								<span className="leading-4">{label}</span>
							</button>
						))}
						<div className="my-1.5 flex min-w-0 flex-1 items-center bg-[#c9e0fa]">
							<svg viewBox="0 0 32 36" className="h-9 w-[33px]">
								<path d="m20 24 8 8" stroke="#f28c1e" strokeWidth="5" strokeLinecap="round" />
								<circle cx="12" cy="14" r="11" fill="#fff" stroke="#8795a5" />
								<circle cx="12" cy="14" r="8.500" fill="#0b6fa4" />
								<path d="m8 14 3 3 5-6" fill="none" stroke="#fff" strokeWidth="2" />
							</svg>
							<input aria-label="Quick search" className="h-[37px] min-w-0 flex-1 border border-[#9ab] bg-white px-1" />
						</div>
						{['Refill', 'Edit', 'Label'].map((n) => <button key={n} className="w-[37px] border-l border-[#4a93dd] bg-[#c9e0fa] text-[11px]">{n}</button>)}
					</div>

					<div className="mt-0.5 flex flex-1 border-t border-[#999]">
						<Workflow />
						<div className="w-1.5 border-x-2 border-[#24418f] bg-[#c9daf5]" />
						<div className="flex min-w-0 flex-1 flex-col">
							<div className="flex h-[23px] items-end border-b border-[#8fb0c8] bg-white pl-[3px] text-[10px]">
								<button className="h-5 w-14 rounded-t-sm border border-b-0 border-[#8fb0c8] bg-[#fbfbfb] pt-0.5 text-[#f0a020]">Rx Entry 1</button>
								<button className="mb-px ml-1 h-[18px] w-[59px] bg-[#e6f2fb] pt-0.5 font-bold text-[#2070d0]">Browse Rx</button>
								<X className="mr-1 mb-1 ml-auto size-2.5 stroke-[4]" />
							</div>
							<div className="flex flex-1">
								<main className="ml-1 flex min-w-0 flex-1 flex-col">
									<PatientPanel />
									<PrescriberPanel />
									<NotesPanel />
									<div className="mt-1.5 flex h-[22px] items-end bg-white">
										<button className="h-[22px] w-[214px] border-r-2 border-[#111] bg-[#267dd8] font-['DejaVu_Sans_Condensed','DejaVu_Sans',sans-serif] text-[11px] font-bold text-white">Rx History (Alt+H or F3 to Activate)</button>
										<button className="h-[21px] w-20 bg-linear-to-b from-[#eee] to-[#ccc] text-[10px] text-[#222]">ERXAction</button>
										<span className="ml-auto flex h-4 w-4 flex-col items-center justify-center bg-[#eee]"><i className="mb-px h-px w-2 bg-black" /><Down className="scale-90" /></span>
									</div>
									<div className="mt-px flex flex-1 flex-col rounded-sm border border-r-2 border-b-2 border-[#333] bg-[#e1e3e3]">
										<div className="min-h-[390px] flex-1 rounded-b-md border border-[#888] bg-linear-to-b from-[#cae2ec] from-30% via-[#e0f1f7] via-65% to-white to-95%">
											<HistoryTable />
										</div>
										<div className="mt-1 border-t-2 border-[#a0a0a0] pt-0.5">
											<ActionBar />
											<div className="h-9"><FilterBar /></div>
										</div>
									</div>
								</main>
								<RightRail />
							</div>
							<div className="mt-1.5 flex h-[18px] items-center border-y border-[#d5d5d5] bg-[#f1efee] text-[10px] font-bold">
								<span className="w-[498px] border-r border-[#d0d0d0] pl-1">Search Prescriber By Last,First Name</span>
								<span className="flex-1 pl-1">New Rx</span>
								<span className="w-[93px] border-x border-[#d0d0d0] pl-1">PH : AE</span>
								<span className="w-[73px]" />
							</div>
						</div>
					</div>
					<div className="h-0.5" />
					<BlueBar />
					<Taskbar />

					<ReportsDialog />

					<div className="absolute top-[522px] right-[3px] z-30 flex h-[29px] w-[181px] items-center bg-[#9b9b9b]/85 font-['Noto_Sans',sans-serif] text-[10px] text-[#eee]">
						<span className="flex h-full w-4 items-center justify-center bg-[#777]"><ChevronRight className="size-3.5" /></span>
						<svg viewBox="0 0 14 12" className="ml-1.5 h-3 w-3.5"><path d="M0 0h8v6H0z" fill="#eee" /><path d="M4 4h9v6H4z" fill="#9b9b9b" stroke="#eee" /><path d="M6 12h5" stroke="#eee" /></svg>
						<span className="ml-3.5">AllTechMD</span>
					</div>
					<div className="pointer-events-none absolute right-[76px] bottom-[88px] z-30 w-[214px] font-['Noto_Sans',sans-serif] text-[#9c9c9c]/80">
						<p className="text-[16px] leading-5">Activate Windows</p>
						<p className="text-[12px] leading-5 whitespace-nowrap">Go to Settings to activate Windows.</p>
					</div>
				</div>
			</div>
		</div>
	);
}
